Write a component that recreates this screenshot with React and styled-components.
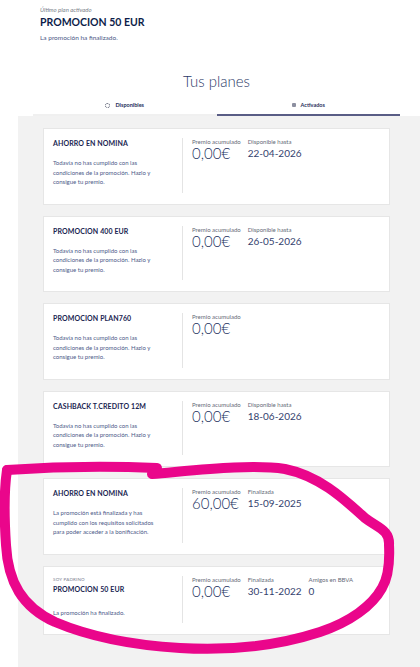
import styled, { createGlobalStyle } from "styled-components";

const GlobalStyle = createGlobalStyle`
  html, body {
    margin: 0;
    padding: 0;
    background: #ffffff;
  }
  body {
    font-family: Lato, "Open Sans", "Liberation Sans", sans-serif;
    -webkit-font-smoothing: antialiased;
  }
`;

const plans = [
  {
    name: "AHORRO EN NOMINA",
    desc: "Todavía no has cumplido con las condiciones de la promoción. Hazlo y consigue tu premio.",
    stats: [
      { label: "Premio acumulado", value: "0,00€", big: true },
      { label: "Disponible hasta", value: "22-04-2026" },
    ],
  },
  {
    name: "PROMOCION 400 EUR",
    desc: "Todavía no has cumplido con las condiciones de la promoción. Hazlo y consigue tu premio.",
    stats: [
      { label: "Premio acumulado", value: "0,00€", big: true },
      { label: "Disponible hasta", value: "26-05-2026" },
    ],
  },
  {
    name: "PROMOCION PLAN760",
    desc: "Todavía no has cumplido con las condiciones de la promoción. Hazlo y consigue tu premio.",
    stats: [{ label: "Premio acumulado", value: "0,00€", big: true }],
  },
  {
    name: "CASHBACK T.CREDITO 12M",
    desc: "Todavía no has cumplido con las condiciones de la promoción. Hazlo y consigue tu premio.",
    stats: [
      { label: "Premio acumulado", value: "0,00€", big: true },
      { label: "Disponible hasta", value: "18-06-2026" },
    ],
  },
  {
    name: "AHORRO EN NOMINA",
    desc: "La promoción está finalizada y has cumplido con los requisitos solicitados para poder acceder a la bonificación.",
    stats: [
      { label: "Premio acumulado", value: "60,00€", big: true },
      { label: "Finalizada", value: "15-09-2025" },
    ],
  },
  {
    eyebrow: "SOY PADRINO",
    name: "PROMOCION 50 EUR",
    desc: "La promoción ha finalizado.",
    stats: [
      { label: "Premio acumulado", value: "0,00€", big: true },
      { label: "Finalizada", value: "30-11-2022" },
      { label: "Amigos en BBVA", value: "0" },
    ],
  },
];

const Page = styled.div`
  position: relative;
  width: 420px;
  min-height: 667px;
  overflow: hidden;
`;

const Header = styled.header`
  padding: 6px 0 0 40px;
`;

const Eyebrow = styled.div`
  font-size: 6px;
  line-height: 8px;
  font-style: italic;
  color: #7a7f8c;
`;

const PlanName = styled.div`
  margin-top: 2px;
  font-size: 10.5px;
  line-height: 12px;
  font-weight: 700;
  color: #0d1d4a;
`;

const Status = styled.div`
  margin-top: 6px;
  font-size: 6.5px;
  line-height: 8px;
  color: #4b5886;
`;

const Section = styled.section`
  margin: 30px 20px 0 33px;
`;

const Title = styled.h2`
  margin: 0;
  text-align: center;
  font-size: 15px;
  line-height: 18px;
  font-weight: 300;
  color: #2c3a68;
`;

const Tabs = styled.div`
  display: flex;
  margin-top: 6px;
`;

const Tab = styled.div`
  flex: 1;
  height: 20px;
  box-sizing: border-box;
  display: flex;
  align-items: center;
  justify-content: center;
  gap: 5px;
  font-size: 5.5px;
  font-weight: 700;
  color: #1f2d5c;
  border-bottom: 2px solid ${({ $active }) => ($active ? "#595d85" : "#f0f0f0")};
`;

const RingIcon = styled.span`
  width: 3px;
  height: 3px;
  border: 1px dotted #55596e;
  border-radius: 50%;
`;

const SquareIcon = styled.span`
  width: 4px;
  height: 4px;
  background: #8c8fa0;
  border-radius: 1px;
`;

const Panel = styled.div`
  margin-left: 18px;
  background: #f2f2f2;
  padding: 12px 30px 40px 25px;
  display: flex;
  flex-direction: column;
  gap: 11px;
`;

const Card = styled.div`
  display: flex;
  background: #ffffff;
  border: 1px solid #e6e6e6;
  padding: 9px 0 11px 9px;
`;

const Info = styled.div`
  width: 130px;
  flex-shrink: 0;
  box-sizing: border-box;
  padding: 0 10px 6px 0;
  border-right: 1px solid #e4e4e4;
`;

const SmallTag = styled.div`
  font-size: 4.5px;
  line-height: 8px;
  color: #7c8090;
  letter-spacing: 0.2px;
`;

const CardName = styled.div`
  font-size: 7px;
  line-height: 10px;
  font-weight: 700;
  color: #1a2551;
  letter-spacing: 0.1px;
`;

const Desc = styled.p`
  margin: ${({ $short }) => ($short ? "14px" : "10px")} 0 0;
  max-width: 102px;
  font-size: 6px;
  line-height: 9.5px;
  color: #4d5a89;
`;

const Stats = styled.div`
  display: flex;
  align-items: flex-start;
  gap: 7px;
  padding-left: 9px;
`;

const Stat = styled.div`
  display: flex;
  flex-direction: column;
`;

const StatLabel = styled.span`
  font-size: 6px;
  line-height: 8px;
  color: #666a78;
  white-space: nowrap;
`;

const StatValue = styled.span`
  font-size: ${({ $big }) => ($big ? "15px" : "10px")};
  line-height: 15px;
  font-weight: ${({ $big }) => ($big ? 300 : 400)};
  color: ${({ $big }) => ($big ? "#24335f" : "#34426e")};
  white-space: nowrap;
`;

const Scribble = styled.svg`
  position: absolute;
  left: 0;
  top: 0;
  pointer-events: none;
`;

export default function App() {
  return (
    <Page>
      <GlobalStyle />
      <Header>
        <Eyebrow>Último plan activado</Eyebrow>
        <PlanName>PROMOCION 50 EUR</PlanName>
        <Status>La promoción ha finalizado.</Status>
      </Header>

      <Section>
        <Title>Tus planes</Title>
        <Tabs>
          <Tab>
            <RingIcon />
            Disponibles
          </Tab>
          <Tab $active>
            <SquareIcon />
            Activados
          </Tab>
        </Tabs>
      </Section>

      <Panel>
        {plans.map((plan, idx) => (
          <Card key={idx}>
            <Info>
              {plan.eyebrow && <SmallTag>{plan.eyebrow}</SmallTag>}
              <CardName>{plan.name}</CardName>
              <Desc $short={!!plan.eyebrow}>{plan.desc}</Desc>
            </Info>
            <Stats>
              {plan.stats.map((s) => (
                <Stat key={s.label}>
                  <StatLabel>{s.label}</StatLabel>
                  <StatValue $big={s.big}>{s.value}</StatValue>
                </Stat>
              ))}
            </Stats>
          </Card>
        ))}
      </Panel>

      {/* hand-drawn highlight over the last two cards */}
      <Scribble width="420" height="667" viewBox="0 0 420 667">
        <g fill="none" stroke="#ea068b" strokeWidth="10" strokeLinecap="round" strokeLinejoin="round">
          <path d="M 7 470 C 50 467, 110 466, 157 468" />
          <path d="M 152 474 C 200 470, 250 464, 285 469 C 320 476, 345 500, 365 518 C 378 528, 390 530, 389 545 C 390 565, 388 578, 382 588 C 372 606, 350 622, 320 632 C 280 645, 230 651, 180 648 C 130 645, 88 636, 55 622 C 22 607, 8 582, 6 545 C 4 515, 4 490, 7 470" />
        </g>
      </Scribble>
    </Page>
  );
}
